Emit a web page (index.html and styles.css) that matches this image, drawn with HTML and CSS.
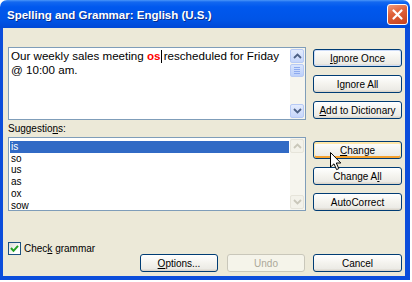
FILE: index.html
```html
<!DOCTYPE html>
<html lang="en">

<head>
    <meta charset="UTF-8">
    <title>Spelling and Grammar</title>
    <link rel="stylesheet" href="styles.css">
</head>

<body>
    <div class="window">
        <div class="titlebar">
            <span class="title">Spelling and Grammar: English (U.S.)</span>
            <span class="close">
                <svg width="13" height="13" viewBox="0 0 13 13">
                    <path d="M2.5 2.5 L10.5 10.5 M10.5 2.5 L2.5 10.5" stroke="#fff" stroke-width="2.2" stroke-linecap="round" />
                </svg>
            </span>
        </div>

        <div class="frame">
            <!-- sentence box -->
            <div class="row">
                <div class="textbox">
                    <div class="sentence">Our weekly sales meeting <b class="err">os</b><span class="caret"></span> rescheduled for Friday @ 10:00 am.</div>
                    <div class="scrollbar">
                        <div class="sbtn">
                            <svg width="9" height="6" viewBox="0 0 9 6"><path d="M1 5 L4.5 1.5 L8 5" fill="none" stroke="#4D6185" stroke-width="1.8" /></svg>
                        </div>
                        <div class="track">
                            <div class="thumb"><i></i><i></i><i></i><i></i></div>
                        </div>
                        <div class="sbtn">
                            <svg width="9" height="6" viewBox="0 0 9 6"><path d="M1 1 L4.5 4.5 L8 1" fill="none" stroke="#4D6185" stroke-width="1.8" /></svg>
                        </div>
                    </div>
                </div>
                <div class="side">
                    <button class="btn default"><u>I</u>gnore Once</button>
                    <button class="btn">I<u>g</u>nore All</button>
                    <button class="btn"><u>A</u>dd to Dictionary</button>
                </div>
            </div>

            <div class="label">Suggestio<u>n</u>s:</div>

            <!-- suggestions list -->
            <div class="row">
                <div class="listbox">
                    <ul class="items">
                        <li class="selected">is</li>
                        <li>so</li>
                        <li>us</li>
                        <li>as</li>
                        <li>ox</li>
                        <li>sow</li>
                    </ul>
                    <div class="scrollbar off">
                        <div class="sbtn">
                            <svg width="9" height="6" viewBox="0 0 9 6"><path d="M1 5 L4.5 1.5 L8 5" fill="none" stroke="#C9C7BA" stroke-width="1.8" /></svg>
                        </div>
                        <div class="track"></div>
                        <div class="sbtn">
                            <svg width="9" height="6" viewBox="0 0 9 6"><path d="M1 1 L4.5 4.5 L8 1" fill="none" stroke="#C9C7BA" stroke-width="1.8" /></svg>
                        </div>
                    </div>
                </div>
                <div class="side lower">
                    <button class="btn hot"><u>C</u>hange</button>
                    <button class="btn">Change A<u>l</u>l</button>
                    <button class="btn">AutoCorrect</button>
                </div>
            </div>

            <!-- bottom -->
            <div class="row bottom">
                <div class="bottom-left">
                    <label class="check">
                        <span class="box">
                            <svg width="11" height="11" viewBox="0 0 11 11"><path d="M2 5 L4.5 7.8 L9 2.8" fill="none" stroke="#21A121" stroke-width="2" /></svg>
                        </span>
                        <span>Chec<u>k</u> grammar</span>
                    </label>
                    <div class="actions">
                        <button class="btn small"><u>O</u>ptions...</button>
                        <button class="btn small" disabled>Undo</button>
                    </div>
                </div>
                <div class="side">
                    <button class="btn">Cancel</button>
                </div>
            </div>
        </div>

        <svg class="pointer" width="12" height="19" viewBox="0 0 12 19">
            <path d="M0.5 0.5 L0.5 15 L4 11.8 L6.6 17.6 L8.8 16.6 L6.3 11 L10.8 11 Z" fill="#fff" stroke="#000" stroke-width="1" />
        </svg>
    </div>
</body>

</html>
```

FILE: styles.css
```css
* {
    box-sizing: border-box;
}

body {
    margin: 0;
    background: #fff;
    font-family: "Liberation Sans", Arial, sans-serif;
    font-size: 10px;
    color: #000;
}

.window {
    position: relative;
    width: 410px;
    height: 280px;
    display: flex;
    flex-direction: column;
}

/* Title bar */
.titlebar {
    height: 28px;
    display: flex;
    align-items: center;
    justify-content: space-between;
    padding: 0 2px 0 7px;
    border-radius: 7px 7px 0 0;
    background: linear-gradient(180deg, #4A96F8 0, #1368F0 2px, #0058EE 7px, #0054E6 20px, #0048D6 28px);
}

.title {
    color: #fff;
    font-weight: bold;
    font-size: 11.5px;
    padding-top: 1px;
    text-shadow: 1px 1px 0 #0A2F8C;
}

.close {
    width: 21px;
    height: 21px;
    display: flex;
    align-items: center;
    justify-content: center;
    border: 1px solid #fff;
    border-radius: 3px;
    background: linear-gradient(160deg, #F09A7C 0, #E0623A 40%, #C6411C 100%);
}

/* Dialog body */
.frame {
    flex: 1;
    background: #ECE9D8;
    border-left: 3px solid #0B4DDB;
    border-right: 5px solid #0B4DDB;
    border-bottom: 4px solid #0B4DDB;
    padding: 19px 3px 0 5px;
}

.row {
    display: flex;
    gap: 7px;
}

.side {
    width: 89px;
    display: flex;
    flex-direction: column;
    gap: 8px;
    padding-top: 2px;
}

.side.lower {
    padding-top: 4px;
}

/* Buttons */
.btn {
    height: 18px;
    padding: 0;
    font-family: inherit;
    font-size: 10px;
    color: #000;
    border: 1px solid #003C74;
    border-radius: 3px;
    background: linear-gradient(180deg, #FFFFFF 0, #F4F3EE 50%, #ECEBE6 85%, #D6D0C5 100%);
}

.btn.default {
    box-shadow: inset 0 0 0 1px #CEDDF8;
}

.btn.hot {
    box-shadow: inset 0 1px 0 1px #FFE7A8, inset 0 -1px 0 1px #F5A12E;
}

.btn:disabled {
    color: #ACA899;
    border-color: #C9C7BA;
    background: #F5F4EA;
}

.btn.small {
    width: 78px;
}

/* Sentence box */
.textbox {
    width: 298px;
    height: 73px;
    display: flex;
    background: #fff;
    border: 1px solid #7F9DB9;
}

.sentence {
    flex: 1;
    padding: 1px 0 0 2px;
    font-size: 11.6px;
    line-height: 14px;
}

.err {
    color: #F00;
}

.caret {
    display: inline-block;
    width: 1px;
    height: 13px;
    margin-right: -1px;
    vertical-align: -3px;
    background: #000;
}

.scrollbar {
    width: 15px;
    flex-shrink: 0;
    display: flex;
    flex-direction: column;
    padding: 1px 1px 1px 0;
    background: #F6F5EE;
}

.sbtn {
    height: 14px;
    display: flex;
    align-items: center;
    justify-content: center;
    border: 1px solid #B7CAF5;
    border-radius: 2px;
    background: linear-gradient(180deg, #E4ECFD 0, #C6D6FB 100%);
}

.track {
    flex: 1;
    padding-top: 1px;
}

.thumb {
    height: 13px;
    display: flex;
    flex-direction: column;
    align-items: center;
    justify-content: center;
    gap: 1px;
    border: 1px solid #B7CAF5;
    border-radius: 2px;
    background: linear-gradient(180deg, #D9E5FD 0, #BDD0FA 100%);
}

.thumb i {
    width: 6px;
    height: 1px;
    background: #8EABEF;
}

.scrollbar.off .sbtn {
    border-color: #E6E4DA;
    background: #F3F2EA;
}

/* Label */
.label {
    padding-top: 2px;
    line-height: 13px;
    margin-bottom: 2px;
}

/* Suggestions list */
.listbox {
    width: 298px;
    height: 74px;
    display: flex;
    background: #fff;
    border: 1px solid #7F9DB9;
}

.items {
    flex: 1;
    list-style: none;
    margin: 0;
    padding: 3px 1px 0 1px;
    line-height: 11.7px;
}

.items li {
    padding-left: 1px;
}

.items li.selected {
    background: #316AC5;
    color: #fff;
}

/* Bottom row */
.bottom {
    margin-top: 31px;
}

.bottom-left {
    width: 298px;
    display: flex;
    flex-direction: column;
}

.check {
    height: 12px;
    display: flex;
    align-items: center;
    gap: 3px;
}

.box {
    width: 13px;
    height: 13px;
    display: flex;
    align-items: center;
    justify-content: center;
    border: 1px solid #1C5180;
    background: linear-gradient(135deg, #DCDBD5 0, #FFFFFF 70%);
}

.actions {
    display: flex;
    justify-content: flex-end;
    gap: 9px;
    padding-right: 1px;
}

.bottom .side {
    justify-content: flex-end;
}

/* Mouse pointer over the Change button */
.pointer {
    position: absolute;
    left: 330px;
    top: 152px;
}
```
